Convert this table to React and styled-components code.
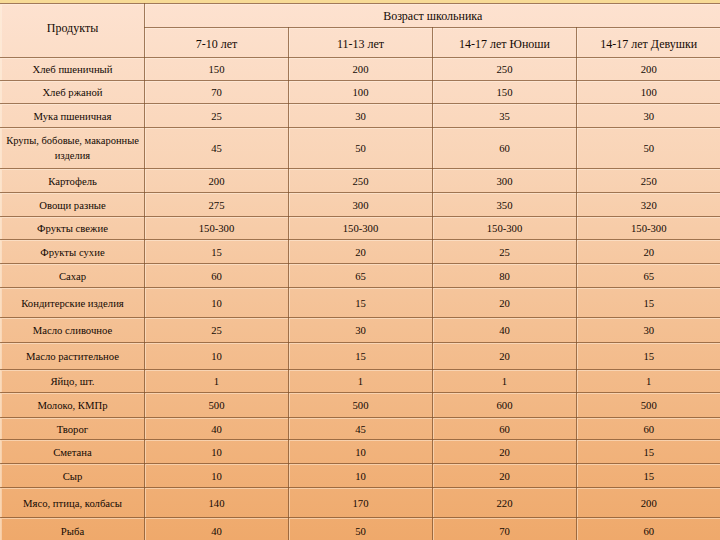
import React from "react";
import styled, { createGlobalStyle } from "styled-components";

const GlobalStyle = createGlobalStyle`
  html, body {
    margin: 0;
    padding: 0;
    width: 720px;
    height: 540px;
    overflow: hidden;
  }
  body {
    font-family: "Liberation Serif", "Times New Roman", serif;
    background: #efa96b;
  }
`;

const ages = ["7-10 лет", "11-13 лет", "14-17 лет Юноши", "14-17 лет Девушки"];

// [name, values, row height, small text]
const rows = [
  ["Хлеб пшеничный", ["150", "200", "250", "200"], 23],
  ["Хлеб ржаной", ["70", "100", "150", "100"], 23],
  ["Мука пшеничная", ["25", "30", "35", "30"], 24],
  ["Крупы, бобовые, макаронные\nизделия", ["45", "50", "60", "50"], 41, true],
  ["Картофель", ["200", "250", "300", "250"], 24],
  ["Овощи разные", ["275", "300", "350", "320"], 24],
  ["Фрукты свежие", ["150-300", "150-300", "150-300", "150-300"], 23],
  ["Фрукты сухие", ["15", "20", "25", "20"], 24],
  ["Сахар", ["60", "65", "80", "65"], 24],
  ["Кондитерские изделия", ["10", "15", "20", "15"], 30],
  ["Масло сливочное", ["25", "30", "40", "30"], 25],
  ["Масло растительное", ["10", "15", "20", "15"], 27],
  ["Яйцо, шт.", ["1", "1", "1", "1"], 23],
  ["Молоко, КМПр", ["500", "500", "600", "500"], 25],
  ["Творог", ["40", "45", "60", "60"], 22],
  ["Сметана", ["10", "10", "20", "15"], 24],
  ["Сыр", ["10", "10", "20", "15"], 24],
  ["Мясо, птица, колбасы", ["140", "170", "220", "200"], 30],
  ["Рыба", ["40", "50", "70", "60"], 26],
];

const Page = styled.div`
  width: 720px;
  height: 540px;
  overflow: hidden;
  border-top: 3px solid #f7da96;
  box-sizing: border-box;
  background: linear-gradient(180deg, #fde2d0 0%, #f9d4b6 30%, #f4c093 60%, #efa96b 100%);
`;

const Table = styled.table`
  width: 720px;
  border-collapse: collapse;
  table-layout: fixed;
  color: #140a04;
  font-family: "Liberation Serif", "Times New Roman", serif;
  font-size: 10.7px;
  line-height: 14px;
`;

const Row = styled.tr`
  height: ${(p) => p.$h}px;
`;

const Cell = styled.td`
  padding: 0 1px;
  text-align: center;
  vertical-align: middle;
  white-space: pre;
  overflow: hidden;
  border: 1px solid rgba(125, 80, 45, 0.72);
  box-shadow: inset 1px 1px 0 rgba(255, 245, 230, 0.45);
  width: 144px;
  font-family: "Liberation Serif", "Times New Roman", serif;
  font-size: ${(p) => (p.$tight ? "10.5px" : "10.7px")};
  line-height: ${(p) => (p.$tight ? "15px" : "14px")};
  &:first-child {
    border-left-color: rgba(255, 240, 220, 0.6);
  }
  &:last-child {
    border-right: none;
  }
`;

const HeadCell = styled(Cell)`
  font-size: 12px;
  padding-top: ${(p) => p.$pt || 0}px;
`;

const Shift = styled.div`
  margin-top: -6px;
`;

export default function App() {
  return (
    <>
      <GlobalStyle />
      <Page>
        <Table>
          <colgroup>
            {[0, 1, 2, 3, 4].map((i) => (
              <col key={i} style={{ width: 144 }} />
            ))}
          </colgroup>
          <tbody>
            <Row $h={24}>
              <HeadCell rowSpan={2}>
                <Shift>Продукты</Shift>
              </HeadCell>
              <HeadCell colSpan={4}>Возраст школьника</HeadCell>
            </Row>
            <Row $h={30}>
              {ages.map((a) => (
                <HeadCell key={a} $pt={3}>
                  {a}
                </HeadCell>
              ))}
            </Row>
            {rows.map(([name, vals, h, tight]) => (
              <Row key={name} $h={h}>
                <Cell $tight={tight}>{name}</Cell>
                {vals.map((v, i) => (
                  <Cell key={i}>{v}</Cell>
                ))}
              </Row>
            ))}
          </tbody>
        </Table>
      </Page>
    </>
  );
}
